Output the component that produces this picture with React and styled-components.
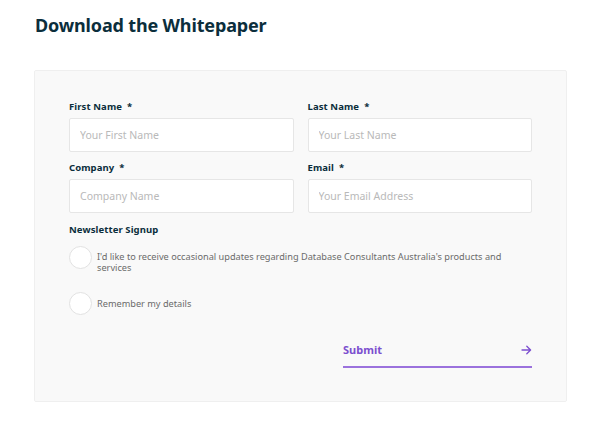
import React from "react";
import styled, { createGlobalStyle } from "styled-components";

const GlobalStyle = createGlobalStyle`
  body {
    margin: 0;
    background: #ffffff;
    font-family: "Noto Sans", "Open Sans", sans-serif;
  }
`;

const Page = styled.div`
  padding: 11px 35px 0 34px;
  width: 602px;
  box-sizing: border-box;
`;

const Title = styled.h1`
  margin: 0 0 31px 1px;
  font-size: 18px;
  font-weight: 700;
  line-height: 28px;
  letter-spacing: -0.15px;
  color: #0b2e3c;
`;

const Panel = styled.form`
  background: #f9f9f9;
  border: 1px solid #efefef;
  border-radius: 2px;
  padding: 30px 34px 33px 34px;
`;

const Grid = styled.div`
  display: grid;
  grid-template-columns: 1fr 1fr;
  column-gap: 14px;
  row-gap: 10px;
`;

const Field = styled.div`
  display: flex;
  flex-direction: column;
  gap: 5px;
`;

const Label = styled.label`
  font-size: 9.5px;
  font-weight: 700;
  color: #0b2e3c;
  line-height: 12px;
  letter-spacing: 0.1px;

  span {
    margin-left: 5px;
  }
`;

const Input = styled.input`
  height: 34px;
  box-sizing: border-box;
  border: 1px solid #e6e6e6;
  border-radius: 2px;
  background: #fff;
  padding: 0 10px;
  font-family: inherit;
  font-size: 10.5px;
  outline: none;
  &::placeholder {
    color: #b9b9b9;
  }
`;

const Section = styled.div`
  margin-top: 11px;
  display: flex;
  flex-direction: column;
`;

const CheckRow = styled.label`
  display: flex;
  align-items: ${({ $top }) => ($top ? "flex-start" : "center")};
  gap: 5px;
  margin-top: ${({ $gap }) => $gap}px;
  font-size: 9.2px;
  line-height: 11px;
  color: #6b6b6b;
`;

const Circle = styled.span`
  flex: none;
  width: 21px;
  height: 21px;
  border-radius: 50%;
  border: 1px solid #e2e2e2;
  background: #fff;
`;

const CheckText = styled.span`
  padding-top: ${({ $pad }) => $pad || 0}px;
  max-width: 420px;
`;

const SubmitWrap = styled.div`
  display: flex;
  justify-content: flex-end;
  margin-top: 27px;
`;

const SubmitButton = styled.button`
  width: 189px;
  display: flex;
  align-items: center;
  justify-content: space-between;
  background: none;
  border: none;
  border-bottom: 2px solid #9b72dd;
  padding: 0 0 9px 0;
  font-family: inherit;
  font-size: 11px;
  font-weight: 700;
  color: #7c4fcf;
  cursor: pointer;
`;

const Arrow = () => (
  <svg width="11" height="10" viewBox="0 0 11 10" fill="none">
    <path
      d="M1 5h8.5M5.8 1.2L9.6 5 5.8 8.8"
      stroke="#7c4fcf"
      strokeWidth="1.3"
      strokeLinecap="round"
      strokeLinejoin="round"
    />
  </svg>
);

const fields = [
  { label: "First Name", placeholder: "Your First Name" },
  { label: "Last Name", placeholder: "Your Last Name" },
  { label: "Company", placeholder: "Company Name" },
  { label: "Email", placeholder: "Your Email Address" },
];

export default function App() {
  return (
    <>
      <GlobalStyle />
      <Page>
        <Title>Download the Whitepaper</Title>
        <Panel onSubmit={(e) => e.preventDefault()}>
          <Grid>
            {fields.map((f) => (
              <Field key={f.label}>
                <Label>
                  {f.label}
                  <span>*</span>
                </Label>
                <Input placeholder={f.placeholder} />
              </Field>
            ))}
          </Grid>
          <Section>
            <Label>Newsletter Signup</Label>
            <CheckRow $top $gap={10}>
              <Circle />
              <CheckText $pad={5}>
                I'd like to receive occasional updates regarding Database
                Consultants Australia's products and services
              </CheckText>
            </CheckRow>
            <CheckRow $gap={19}>
              <Circle />
              <CheckText>Remember my details</CheckText>
            </CheckRow>
          </Section>
          <SubmitWrap>
            <SubmitButton type="submit">
              Submit
              <Arrow />
            </SubmitButton>
          </SubmitWrap>
        </Panel>
      </Page>
    </>
  );
}
